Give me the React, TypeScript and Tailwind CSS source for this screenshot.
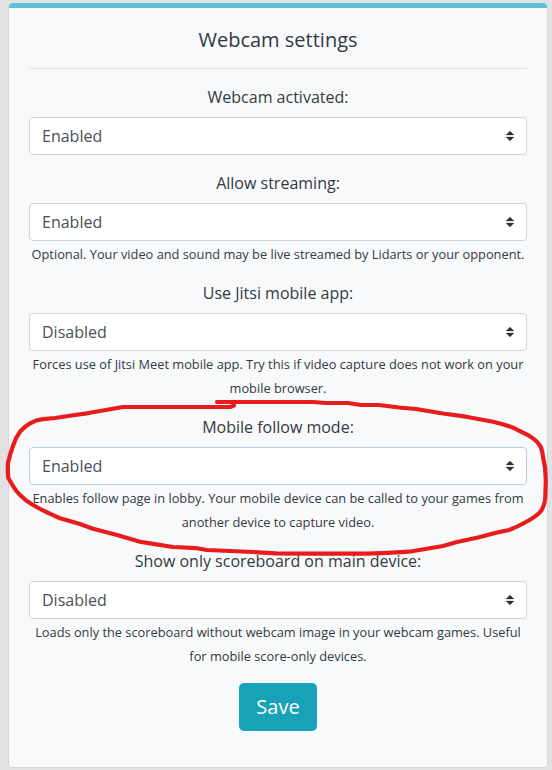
type Field = {
  label: string;
  value: "Enabled" | "Disabled";
  help?: string;
  focused?: boolean;
};

const fields: Field[] = [
  { label: "Webcam activated:", value: "Enabled" },
  {
    label: "Allow streaming:",
    value: "Enabled",
    help: "Optional. Your video and sound may be live streamed by Lidarts or your opponent.",
  },
  {
    label: "Use Jitsi mobile app:",
    value: "Disabled",
    help: "Forces use of Jitsi Meet mobile app. Try this if video capture does not work on your mobile browser.",
  },
  {
    label: "Mobile follow mode:",
    value: "Enabled",
    focused: true,
    help: "Enables follow page in lobby. Your mobile device can be called to your games from another device to capture video.",
  },
  {
    label: "Show only scoreboard on main device:",
    value: "Disabled",
    help: "Loads only the scoreboard without webcam image in your webcam games. Useful for mobile score-only devices.",
  },
];

function SelectField({ label, value, help, focused }: Field) {
  return (
    <div className="mb-4">
      <div className="mb-2">{label}</div>
      <button
        type="button"
        className={`flex h-[38px] w-full items-center justify-between rounded border bg-white px-3 text-left text-[#495057] ${
          focused ? "border-[#b8cfe4]" : "border-[#ced4da]"
        }`}
      >
        <span>{value}</span>
        <svg width="8" height="10" viewBox="0 0 4 5" fill="#2b3138" stroke="#2b3138" strokeWidth="0.12">
          <path d="M2 0L0 2h4zm0 5L0 3h4z" />
        </svg>
      </button>
      {help && <p className="-mb-px pt-px text-[12.8px] leading-6">{help}</p>}
    </div>
  );
}

/* Freehand marker loop around the follow-mode setting */
function MarkerLoop() {
  return (
    <svg
      className="pointer-events-none absolute left-0 top-0"
      width="552"
      height="770"
      viewBox="0 0 552 770"
      fill="none"
      stroke="#e81c1c"
      strokeWidth="4.2"
      strokeLinecap="round"
      strokeLinejoin="round"
    >
      <path d="M217 402H313L326 403H348L361 405H379L399 407.5L416 409L443 413.5L466 416.7L493 421.7Q505 424.5 513 427.7L529 435.7Q538 441 541 447.5Q542.5 452 543 457L545 467L545.8 480L545.3 497Q545 505 541 511Q537 516 526 522Q517 527 509 530L498 532.3L479 537.3L456 542.2L443 546L409 551.7Q388 553 366 553.7H309L276 553.3L253 552L207 550L197 548.2L173 547L153 543.9L140 541.7L117 535L93 528.7L80 524L60 518.2Q45 512 33 505Q26 501 20 495Q16 491 13 486L8.3 478Q7.5 471 8 463Q10 454 13.3 445Q16 437 20 431.7Q25 426 30 423.3Q36 420 43 419.2L55 418L75 415L87 413.3L100 411L123 407H230L234 405.5" />
    </svg>
  );
}

export default function App() {
  return (
    <div className="relative h-[770px] w-[552px] overflow-hidden bg-[#e2e2e2] pl-2 pt-[3px] font-['Open_Sans',sans-serif] text-base leading-6 text-[#343a40]">
      <div className="h-[765px] w-[540px] rounded border border-t-0 border-black/[0.05] bg-[#f8f9fa] bg-clip-padding">
        <div className="h-[764px] overflow-hidden rounded bg-[#f8f9fb]">
          <div className="h-[5px] bg-[#5bc0de]" />
          <div className="px-5 pt-5 text-center">
            <h1 className="pb-4 text-xl leading-6">Webcam settings</h1>
            <hr className="mb-4 border-[#dedfe1]" />
            {fields.map((field) => (
              <SelectField key={field.label} {...field} />
            ))}
            <button
              type="button"
              className="h-12 w-[78px] rounded-[5px] bg-[#17a2b8] text-xl leading-[30px] text-white"
            >
              Save
            </button>
          </div>
        </div>
      </div>
      <MarkerLoop />
    </div>
  );
}
